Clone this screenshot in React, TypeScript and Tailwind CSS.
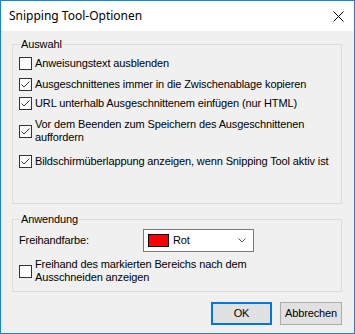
import React from "react";

function Check({ checked }: { checked: boolean }) {
  return (
    <div className="w-[13px] h-[13px] shrink-0 border border-[#333333] bg-white">
      {checked && (
        <svg width="11" height="11" viewBox="0 0 11 11" className="block">
          <path d="M1.5 5.5 L4 8 L9.5 2.5" fill="none" stroke="#333333" strokeWidth="1" />
        </svg>
      )}
    </div>
  );
}

function Row({ checked, lines, className }: { checked: boolean; lines: string[]; className: string }) {
  return (
    <div className={"flex items-center pl-[6px] " + className}>
      <Check checked={checked} />
      <div className="ml-[3px] leading-[13px]">
        {lines.map((l, i) => (
          <div key={i} className="whitespace-nowrap">{l}</div>
        ))}
      </div>
    </div>
  );
}

export default function App() {
  return (
    <div
      className="w-[355px] h-[334px] border border-[#1883d7] flex flex-col bg-[#f0f0f0] text-black text-[11px] tracking-[-0.12px] overflow-hidden"
      style={{ fontFamily: '"Liberation Sans", Arial, sans-serif' }}
    >
      <div className="h-[30px] bg-white flex items-center justify-between pl-[8px] pr-[10px] shrink-0">
        <span className="text-[12px] leading-[16px] tracking-normal" style={{ fontFamily: '"Noto Sans", "Open Sans", sans-serif' }}>
          Snipping Tool-Optionen
        </span>
        <svg width="11" height="11" viewBox="0 0 11 11" className="block">
          <path d="M0.5 0.5 L10.5 10.5 M10.5 0.5 L0.5 10.5" stroke="#000" strokeWidth="1" />
        </svg>
      </div>
      <div className="flex flex-col">
        <div className="mt-[13px] ml-[11px] w-[330px] h-[160px] border border-[#dcdcdc] flex flex-col">
          <span className="-mt-[7px] ml-[7px] px-[1px] self-start bg-[#f0f0f0] leading-[13px]">Auswahl</span>
          <Row checked={false} lines={["Anweisungstext ausblenden"]} className="mt-[6px]" />
          <Row checked={true} lines={["Ausgeschnittenes immer in die Zwischenablage kopieren"]} className="mt-[8px]" />
          <Row checked={true} lines={["URL unterhalb Ausgeschnittenem einfügen (nur HTML)"]} className="mt-[6px]" />
          <Row
            checked={true}
            lines={["Vor dem Beenden zum Speichern des Ausgeschnittenen", "auffordern"]}
            className="mt-[8px]"
          />
          <Row
            checked={true}
            lines={["Bildschirmüberlappung anzeigen, wenn Snipping Tool aktiv ist"]}
            className="mt-[11px]"
          />
        </div>
        <div className="mt-[15px] ml-[11px] w-[330px] h-[73px] border border-[#dcdcdc] flex flex-col">
          <span className="-mt-[7px] ml-[7px] px-[1px] self-start bg-[#f0f0f0] leading-[13px]">Anwendung</span>
          <div className="flex items-center mt-[3px] pl-[6px]">
            <span className="w-[124px] leading-[13px]">Freihandfarbe:</span>
            <div className="w-[111px] h-[23px] border border-[#7a7a7a] bg-white flex items-center pl-[4px] pr-[7px]">
              <div className="w-[21px] h-[13px] border border-black bg-[#ff0000]" />
              <span className="ml-[4px] flex-1">Rot</span>
              <svg width="8" height="5" viewBox="0 0 8 5" className="block">
                <path d="M0.5 0.5 L4 4 L7.5 0.5" fill="none" stroke="#555" strokeWidth="1" />
              </svg>
            </div>
          </div>
          <Row
            checked={false}
            lines={["Freihand des markierten Bereichs nach dem", "Ausschneiden anzeigen"]}
            className="mt-[6px]"
          />
        </div>
        <div className="mt-[10px] ml-[11px] w-[330px] flex justify-end gap-[8px]">
          <button className="w-[61px] h-[23px] bg-[#e1e1e1] border-2 border-[#0078d7] leading-[13px]">OK</button>
          <button className="w-[62px] h-[23px] bg-[#e1e1e1] border border-[#adadad] leading-[13px]">Abbrechen</button>
        </div>
      </div>
    </div>
  );
}
